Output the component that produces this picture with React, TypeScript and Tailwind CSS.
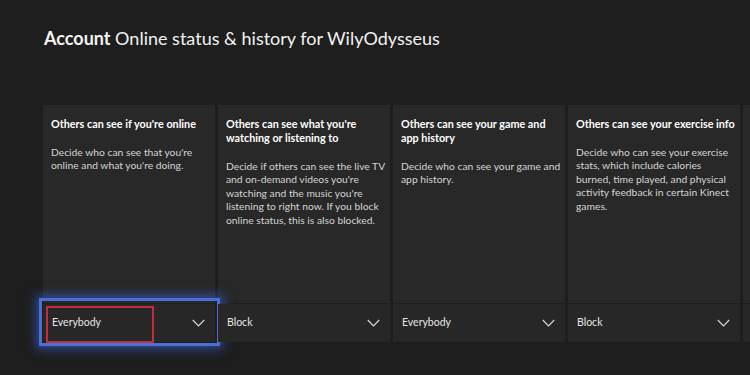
import React from "react";

type Setting = {
  title: React.ReactNode;
  body: React.ReactNode;
  value: string;
};

const settings: Setting[] = [
  {
    title: "Others can see if you're online",
    body: "Decide who can see that you're online and what you're doing.",
    value: "Everybody",
  },
  {
    title: "Others can see what you're watching or listening to",
    body: "Decide if others can see the live TV and on-demand videos you're watching and the music you're listening to right now. If you block online status, this is also blocked.",
    value: "Block",
  },
  {
    title: "Others can see your game and app history",
    body: "Decide who can see your game and app history.",
    value: "Everybody",
  },
  {
    title: "Others can see your exercise info",
    body: "Decide who can see your exercise stats, which include calories burned, time played, and physical activity feedback in certain Kinect games.",
    value: "Block",
  },
  {
    title: (
      <>
        Others can see your
        <br />
        exercise history
      </>
    ),
    body: (
      <>
        Decide who can see
        <br />
        activity from the
        <br />
        wellness apps.
      </>
    ),
    value: "Everybody",
  },
];

const Chevron = () => (
  <svg width="13" height="8" viewBox="0 0 13 8" fill="none">
    <path d="M0.8 1 L6.5 6.8 L12.2 1" stroke="#d8d8d8" strokeWidth="1.2" />
  </svg>
);

// one settings tile, the first one carries the focus ring
const SettingCard = ({ item, focused }: { item: Setting; focused: boolean }) => {
  return (
    <div className="w-[172px] h-[237px] shrink-0 flex flex-col">
      <div className="flex-1 bg-[#282828] pl-[8px] pr-[2px] pt-[12px]">
        <div className="text-[10.8px] leading-[14px] font-bold text-white">
          {item.title}
        </div>
        <div className="mt-[15px] text-[10.3px] leading-[13.4px] text-[#d4d4d4]">
          {item.body}
        </div>
      </div>
      <div className="relative h-[38px] mt-[1px] bg-[#272727] flex items-center justify-between pl-[9px] pr-[10px]">
        <span className="text-[10.5px] text-[#e6e6e6]">{item.value}</span>
        <Chevron />
        {focused && (
          <>
            <div className="absolute -left-[4px] -right-[5px] -top-[6px] -bottom-[4px] border-[3px] border-[#4a6fd6] shadow-[0_0_10px_3px_rgba(60,100,230,0.6)] pointer-events-none" />
            <div className="absolute left-[3px] top-[2px] w-[108px] h-[37px] border-[2px] border-[#c22f3b] pointer-events-none" />
          </>
        )}
      </div>
    </div>
  );
};

export default function App() {
  return (
    <div
      className="w-[750px] h-[375px] overflow-hidden bg-[#1e1e1e] text-white"
      style={{ fontFamily: 'Lato, "Open Sans", sans-serif' }}
    >
      <div className="pt-[26px] pl-[44px] text-[18px] leading-[24px] text-[#f2f2f2]">
        <span className="font-bold">Account</span> Online status &amp; history
        for WilyOdysseus
      </div>
      <div className="mt-[55px] pl-[43px] flex gap-[3px]">
        {settings.map((s, i) => (
          <SettingCard key={i} item={s} focused={i === 0} />
        ))}
      </div>
    </div>
  );
}
